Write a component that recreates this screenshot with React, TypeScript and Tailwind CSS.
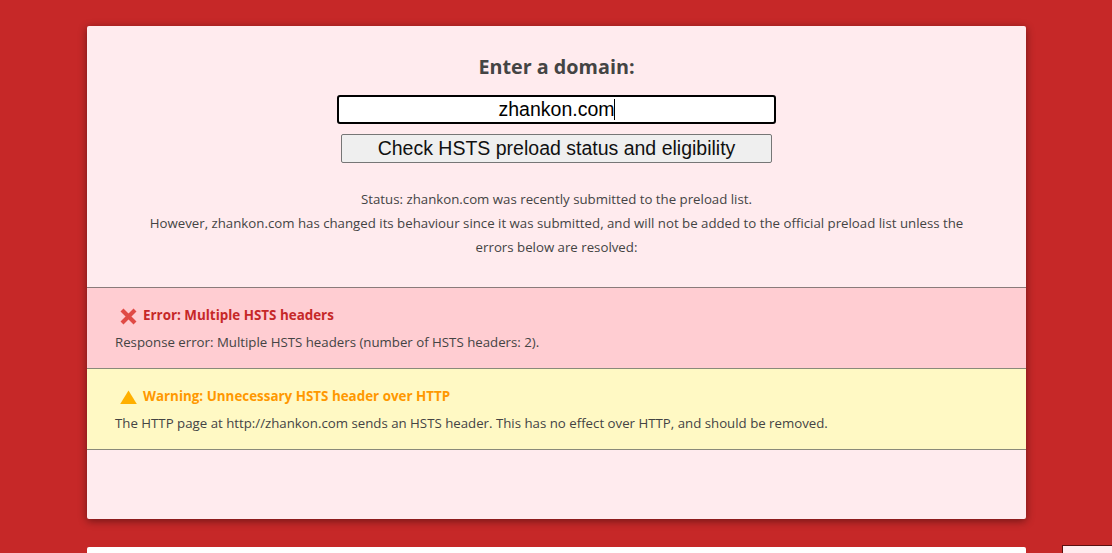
import { useEffect, useRef } from "react"

export default function App() {
  return (
    <div className="h-[553px] overflow-hidden bg-[#c62828] pt-[26px] font-['Open_Sans',sans-serif] text-[#444]">
      <main className="ml-[87px] h-[493px] w-[939px] rounded-[2px] bg-[#ffebee] shadow-[0_2px_8px_rgba(0,0,0,0.45)]">
        <DomainForm />
        <p className="mt-[24px] px-[55px] text-center text-[13.25px] leading-[24px]">
          Status: zhankon.com was recently submitted to the preload list.
          <br />
          However, zhankon.com has changed its behaviour since it was submitted, and will not be added to the official preload list unless the errors below are resolved:
        </p>
        <div className="mt-[28px]">
          <Issue
            tone="border-[#8a7a7a] bg-[#ffcdd2]"
            titleColor="text-[#c62828]"
            icon={<CrossIcon />}
            title="Error: Multiple HSTS headers"
            body="Response error: Multiple HSTS headers (number of HSTS headers: 2)."
          />
          <Issue
            tone="border-[#8a8a7a] bg-[#fff9c4]"
            titleColor="text-[#ff9800]"
            icon={<WarnIcon />}
            title="Warning: Unnecessary HSTS header over HTTP"
            body="The HTTP page at http://zhankon.com sends an HSTS header. This has no effect over HTTP, and should be removed."
            last
          />
        </div>
      </main>
      <div className="mt-[28px] ml-[87px] h-[40px] w-[939px] rounded-[2px] bg-white" />
      <div className="fixed top-[545px] left-[1062px] h-[40px] w-[60px] border border-[#5a1010] bg-[#ffebee]" />
    </div>
  )
}

function DomainForm() {
  const ref = useRef<HTMLInputElement>(null)
  useEffect(() => {
    ref.current?.focus()
  }, [])
  return (
    <form className="flex flex-col items-center pt-[26px]">
      <h2 className="text-[19.75px] leading-[30px] font-bold">Enter a domain:</h2>
      <div className="relative mt-[13px]">
        <input
          ref={ref}
          defaultValue="zhankon.com"
          className="block h-[29px] w-[439px] rounded-[3px] border-2 border-black bg-white text-center font-['Liberation_Sans',sans-serif] text-[19.5px] text-black caret-black outline-none"
        />
        {/* caret, headless shot does not paint the real one */}
        <span className="absolute top-[4px] left-[277px] h-[21px] w-px bg-black" />
      </div>
      <button
        type="button"
        className="mt-[10px] h-[29px] w-[431px] rounded-[2px] border border-[#767676] bg-[#efefef] font-['Liberation_Sans',sans-serif] text-[19.5px] leading-none text-[#111]"
      >
        Check HSTS preload status and eligibility
      </button>
    </form>
  )
}

function Issue({ tone, titleColor, icon, title, body, last }: { tone: string; titleColor: string; icon: React.ReactNode; title: string; body: string; last?: boolean }) {
  return (
    <section className={`${last ? "h-[82px] border-b" : "h-[81px]"} border-t ${tone} px-[28px] pt-[15px]`}>
      <div className="flex items-center gap-[6px] pl-[5px]">
        {icon}
        <h3 className={`text-[13.4px] leading-[24px] font-bold ${titleColor}`}>{title}</h3>
      </div>
      <p className="mt-[3px] text-[13.25px] leading-[24px]">{body}</p>
    </section>
  )
}

function CrossIcon() {
  return (
    <svg width="17" height="17" viewBox="0 0 17 17" className="mt-[2px]">
      <path d="M2 2 L15 15 M15 2 L2 15" stroke="#e04a45" strokeWidth="4.2" fill="none" />
    </svg>
  )
}

function WarnIcon() {
  return (
    <svg width="17" height="14" viewBox="0 0 17 14" className="mt-[2px]">
      <path d="M8.5 0.5 L16.8 14 L0.2 14 Z" fill="#ffb000" />
    </svg>
  )
}
